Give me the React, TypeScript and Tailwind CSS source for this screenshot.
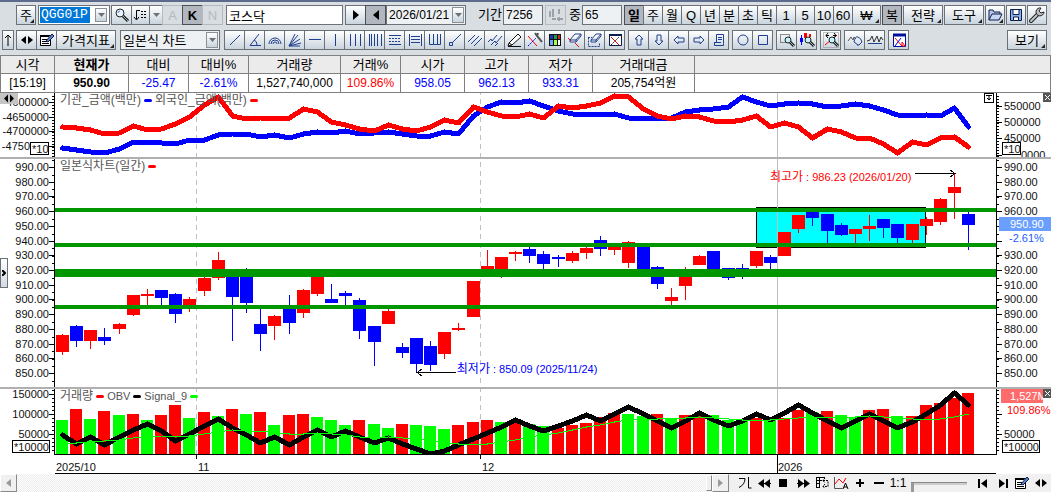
import type { ReactNode } from 'react';
import clsx from 'clsx';

const RED = '#ff0000';
const BLUE = '#0000ff';
const GREEN = '#00ff00';
const NAVY = '#1f3f8f';

/* ---------- data ---------- */

// [open/close top, open/close bottom, high, low, rising]
const candles: [number, number, number, number, boolean][] = [
  [335, 352, 334, 355, true], [326, 341, 325, 347, false], [330, 341, 330, 349, true],
  [337, 341, 328, 345, false], [324, 329, 323, 334, true], [295, 315, 295, 316, true],
  [294, 296, 289, 306, true], [290, 298, 290, 306, false], [294, 314, 293, 323, false],
  [299, 306, 297, 312, true], [278, 291, 277, 296, true], [260, 278, 252, 280, true],
  [272, 297, 270, 341, false], [271, 303, 268, 313, false], [324, 334, 309, 351, false],
  [316, 326, 315, 340, true], [308, 323, 295, 334, false], [290, 313, 289, 318, true],
  [276, 294, 276, 296, true], [299, 303, 284, 303, false], [293, 296, 291, 305, false],
  [300, 331, 298, 339, false], [326, 342, 326, 366, false], [311, 324, 309, 324, true],
  [347, 353, 343, 358, false], [338, 364, 338, 372, false], [346, 365, 341, 371, false],
  [332, 354, 332, 359, true], [328, 330, 323, 331, true], [281, 317, 281, 317, true],
  [266, 270, 250, 270, true], [257, 270, 257, 278, true], [252, 254, 251, 261, true],
  [249, 256, 247, 263, false], [254, 264, 251, 269, false], [257, 259, 255, 267, false],
  [253, 261, 251, 263, true], [248, 253, 247, 259, true], [240, 249, 236, 256, false],
  [246, 250, 246, 255, true], [242, 263, 241, 268, true], [246, 270, 246, 270, false],
  [267, 284, 266, 289, false], [297, 301, 288, 305, true], [275, 286, 267, 300, true],
  [256, 265, 255, 265, true], [251, 270, 251, 270, false], [268, 278, 268, 280, false],
  [268, 270, 264, 279, false], [251, 266, 251, 268, true], [257, 263, 255, 269, false],
  [232, 256, 232, 256, true], [215, 229, 215, 233, true], [211, 218, 211, 226, false],
  [214, 231, 214, 243, false], [225, 235, 223, 236, false], [229, 234, 229, 243, true],
  [226, 229, 215, 241, true], [219, 228, 219, 238, false], [224, 238, 224, 243, false],
  [224, 240, 224, 243, true], [219, 226, 217, 235, true], [199, 222, 198, 225, true],
  [187, 193, 174, 219, true], [214, 225, 212, 250, false],
];

const foreign = [
  127, 128, 130, 134, 133, 126, 130, 129, 124, 117, 105, 97, 116, 119, 118, 118, 118, 109, 112, 122, 125,
  129, 131, 125, 129, 131, 127, 120, 123, 107, 112, 116, 117, 114, 118, 106, 108, 106, 103, 96, 97, 109,
  116, 119, 116, 117, 121, 122, 120, 116, 127, 123, 127, 138, 129, 132, 138, 138, 144, 153, 142, 145, 138, 137, 147,
];

const institution = [
  148, 150, 152, 153, 149, 142, 142, 143, 144, 140, 140, 135, 134, 134, 137, 135, 138, 134, 132, 133, 131,
  134, 133, 132, 134, 136, 136, 132, 134, 116, 107, 102, 103, 101, 106, 111, 114, 114, 115, 114, 118, 118,
  118, 118, 112, 110, 109, 107, 97, 102, 106, 104, 103, 104, 107, 106, 104, 106, 110, 115, 116, 115, 116, 108, 127,
];

const volume = [
  420, 409, 419, 411, 415, 414, 420, 415, 405, 418, 412, 416, 409, 414, 412, 425, 415, 414, 417, 420, 425,
  420, 424, 428, 424, 425, 426, 429, 425, 422, 420, 422, 421, 424, 426, 428, 425, 423, 417, 413, 414, 416,
  414, 418, 415, 415, 415, 420, 420, 418, 418, 418, 410, 412, 411, 415, 417, 410, 409, 416, 416, 405, 403, 398, 393,
];
const volumeUp = '01010101101010101100010010001110100111110010110001011010011011111'
  .split('')
  .map((c) => c === '1');

const obv = [
  435, 444, 437, 445, 437, 430, 424, 431, 441, 434, 426, 419, 428, 435, 443, 437, 445, 437, 430, 437, 431,
  437, 443, 438, 444, 449, 454, 451, 445, 439, 433, 427, 420, 426, 431, 426, 421, 415, 421, 414, 407, 414,
  421, 428, 421, 413, 420, 426, 421, 414, 420, 413, 405, 413, 421, 428, 421, 414, 421, 428, 422, 414, 405, 393, 405,
];

const signal = [
  443, 443, 442, 441, 440, 438, 437, 436, 436, 436, 434, 432, 430, 431, 431, 433, 434, 434, 433, 434, 435,
  437, 438, 437, 438, 439, 441, 443, 444, 444, 444, 442, 440, 437, 435, 433, 430, 427, 425, 422, 420, 419,
  419, 418, 418, 417, 418, 419, 420, 420, 420, 419, 418, 417, 417, 417, 417, 416, 417, 418, 419, 420, 419, 417, 414,
];

const priceLabels = Array.from({ length: 15 }, (_, i) => ({
  text: `${990 - i * 10}.00`,
  y: Math.round(167 + i * 14.71),
}));

// the current price tag takes the place of two labels on the right
const rightPriceLabels = priceLabels.map((l) =>
  l.text === '950.00' || l.text === '940.00' ? { ...l, text: '' } : l,
);

const quotes = [
  { label: '시각', value: '[15:19]', width: 'w-[54px]', color: 'text-black' },
  { label: '현재가', value: '950.90', width: 'w-[74px]', color: 'text-black', bold: true },
  { label: '대비', value: '-25.47', width: 'w-[60px]', color: 'text-[#0000ff]' },
  { label: '대비%', value: '-2.61%', width: 'w-[60px]', color: 'text-[#0000ff]' },
  { label: '거래량', value: '1,527,740,000', width: 'w-[92px]', color: 'text-black' },
  { label: '거래%', value: '109.86%', width: 'w-[60px]', color: 'text-[#ff0000]' },
  { label: '시가', value: '958.05', width: 'w-[64px]', color: 'text-[#0000ff]' },
  { label: '고가', value: '962.13', width: 'w-[64px]', color: 'text-[#0000ff]' },
  { label: '저가', value: '933.31', width: 'w-[64px]', color: 'text-[#0000ff]' },
  { label: '거래대금', value: '205,754억원', width: 'w-[102px]', color: 'text-black' },
];

const periods = ['일', '주', '월', 'Q', '년', '분', '초', '틱', '1', '5', '10', '60'];

/* ---------- icons ---------- */

const Icon = ({ children, w = 18 }: { children: ReactNode; w?: number }) => (
  <svg width={w} height="18" viewBox={`0 0 ${w} 18`} fill="none" stroke={NAVY} className="shrink-0">
    {children}
  </svg>
);

const Lens = () => (
  <>
    <circle cx="7" cy="7" r="4" stroke="#222" fill="#e8f4ff" />
    <path d="M5 7a2 2 0 0 1 2-2" stroke="#4a86d8" />
    <path d="M10 10l5 5" stroke="#222" strokeWidth="3" />
    <path d="M10 10l5 5" stroke="#8fb8b0" />
  </>
);

const Edit = () => (
  <Icon>
    <path d="M2.500 4.500h10v10h-10z" fill="#fff" stroke="#000" />
    <path d="M2 5h9" stroke="#000" strokeWidth="2" />
    <path d="M4 8.500h5M4 10.500h5M4 12.500h7" stroke="#000" />
    <path d="M8 10l6-7 2 2-6 6z" fill="#5c82c8" stroke="#0b1c4a" />
  </Icon>
);

const LeftRight = () => (
  <Icon>
    <path d="M3 9l5-4v8zM15 9l-5-4v8z" fill="#000" stroke="none" />
  </Icon>
);

const Wrench = () => (
  <Icon>
    <path d="M3 15l7-7" stroke="#222" strokeWidth="4" strokeLinecap="round" />
    <path d="M3 15l7-7" stroke="#c4c8cc" strokeWidth="2" strokeLinecap="round" />
    <path d="M13 2a4 4 0 1 0 3 4l-3 1-2-2z" fill="#b9bdc2" stroke="#222" />
  </Icon>
);

const drawingTools: { name: string; art: ReactNode }[] = [
  { name: '추세선', art: <path d="M4 14L14 4" /> },
  { name: '각도선', art: <path d="M13 3L4 14.500h11M8 9q3 1 3 5" /> },
  {
    name: '원호',
    art: <path d="M3 13a6 6 0 0 1 12 0M5 13a4 4 0 0 1 8 0M7 13a2 2 0 0 1 4 0" />,
  },
  { name: '부채꼴', art: <path d="M3 15L9 3M3 15L12 4M3 15l11-7M3 15l12-3M3 15h11" /> },
  { name: '수평선', art: <path d="M3 8.500h12" strokeWidth="1" /> },
  { name: '수직선', art: <path d="M9.500 3v12" /> },
  { name: '삼등분선', art: <path d="M4.500 3v12M9.500 3v12M14.500 3v12" /> },
  { name: '시간대', art: <path d="M3.500 3v12M5.500 3v12M8.500 3v12M11.500 3v12M15.500 3v12" /> },
  {
    name: '되돌림',
    art: (
      <>
        <path d="M3 4.500h12M3 13.500h12" />
        <path d="M3 7.500h12M3 10.500h12" strokeDasharray="2 1" />
      </>
    ),
  },
  { name: '등분선', art: <path d="M3.500 3v12M15.500 3v12M5 5.500h9M5 8.500h9M5 11.500h9" /> },
  { name: '주기선', art: <path d="M3.500 3v10.500h4V3M7.500 13.500h4V3M11.500 13.500h3V3" /> },
  { name: '화살선', art: <path d="M6 12L15 3M3.500 11.500h3v3h-3z" /> },
  { name: '평행선', art: <path d="M2 11l7-7M5 13l8-8M8 15l8-8" /> },
  { name: '채널', art: <path d="M2 11l3-3 1 2 5-6M5 14l4-4 1 2 6-7M9 15l3-3" /> },
  {
    name: '연필',
    art: <path d="M3 12L12 3l3 3-9 8-4 1zM3 12l3 2M2 15.500h13" stroke="#111" fill="#fff" />,
  },
  {
    name: '도구 설정',
    art: (
      <>
        <path d="M2 5l9 10" stroke={RED} />
        <path d="M2 15l8-8" stroke={BLUE} strokeDasharray="2 1" />
        <path d="M9 2l2 3 5 6M12 2l-1 3" stroke="#555" strokeWidth="2" />
      </>
    ),
  },
  {
    name: '색상',
    art: (
      <g stroke="none">
        <path d="M3 3h12v12H3z" fill="#111" />
        <path d="M4 4h3v4H4z" fill="#1738b5" />
        <path d="M8 4h3v4H8z" fill="#19a050" />
        <path d="M12 4h2v4h-2z" fill="#c22" />
        <path d="M4 9h3v5H4z" fill="#6ea8ff" />
        <path d="M8 9h3v5H8z" fill="#a6ff4d" />
        <path d="M12 9h2v5h-2z" fill="#fff" />
      </g>
    ),
  },
  {
    name: '지우개',
    art: (
      <>
        <path d="M4 9l5-6h6l-5 6zM4 9v2h6l5-6V3M10 9v2" fill="#fff" />
        <path d="M2 7l3 3M9 12l4 4" stroke={RED} />
      </>
    ),
  },
  {
    name: '전체 지우기',
    art: (
      <>
        <path d="M2.500 6.500v9h11v-4M2 6.500h4" strokeDasharray="2 1" />
        <path d="M5 9l5-6h5l-5 6zM5 9v2h5l5-6V3M10 9v2" fill="#fff" />
      </>
    ),
  },
  {
    name: '도구 닫기',
    art: (
      <>
        <path d="M3.500 4.500h12v10h-12z" fill="#fff" stroke="#0b1c4a" />
        <path d="M3 4h13" stroke="#0b1c4a" strokeWidth="2" />
        <path d="M5 6l8 8" stroke={RED} />
        <path d="M5 14l8-8" stroke="#222" strokeDasharray="2 1" />
      </>
    ),
  },
];

const arrowTools: { name: string; art: ReactNode }[] = [
  { name: '위', art: <path d="M9 4l4 4h-2v6H7V8H5z" /> },
  { name: '아래', art: <path d="M9 14l4-4h-2V4H7v6H5z" /> },
  { name: '왼쪽', art: <path d="M4 9l4-4v2h6v4H8v2z" /> },
  { name: '오른쪽', art: <path d="M14 9l-4-4v2H4v4h6v2z" /> },
  { name: '메모', art: <path d="M6.500 3.500h7v9M6.500 3.500v8M4.500 11.500v3h9v-2M4 11.500h7M8 6.500h4M8 8.500h4" /> },
];

const shapeTools: { name: string; art: ReactNode }[] = [
  { name: '원', art: <circle cx="9" cy="9" r="5" /> },
  { name: '사각형', art: <path d="M4.500 4.500h9v9h-9z" /> },
];

const SmallLens = () => (
  <>
    <circle cx="10" cy="9" r="3" stroke="#222" fill="#bff4ff" />
    <path d="M12 11l4 4" stroke="#222" strokeWidth="3" />
    <path d="M12 11l4 4" stroke="#8fb8b0" />
  </>
);

const zoomTools: { name: string; art: ReactNode }[] = [
  {
    name: '영역 확대',
    art: (
      <>
        <path d="M2.500 3.500h9v8h-9z" stroke="#222" strokeDasharray="1 1" />
        <SmallLens />
      </>
    ),
  },
  {
    name: '봉 확대',
    art: (
      <>
        <path d="M3.500 4v10" stroke={BLUE} />
        <path d="M2 7h3v4H2z" fill={BLUE} stroke="none" />
        <path d="M6 2h3v5H6zM11 3h2v3h-2z" fill={RED} stroke="none" />
        <SmallLens />
      </>
    ),
  },
];

const chartZoom = [
  {
    name: '차트 확대',
    art: (
      <>
        <path d="M1.500 1.500h15v15h-15z" stroke="#888" strokeDasharray="1 1" />
        <path d="M3 14L15 4" stroke={RED} />
        <path d="M4 4.500h3M11 4.500h3M6 2L4 4.500 6 7M12 2l2 2.500L12 7" stroke="#000" />
        <SmallLens />
      </>
    ),
  },
];

const waveTools: { name: string; art: ReactNode }[] = [
  {
    name: '파동',
    art: (
      <>
        <path d="M2 10l3-4 2 3 1-3 2 2" stroke="#555" />
        <path d="M8 11q1-6 4-5t4 5l-3 3h-2M8 11l4 3" />
      </>
    ),
  },
  {
    name: '진폭',
    art: (
      <>
        <path d="M1 10l3-1 2-4 2 6 3-6 2 6 2-5 2 3" stroke="#333" />
        <path d="M2 12.500h14" />
      </>
    ),
  },
];

const chartSettings = [
  {
    name: '차트 설정',
    art: (
      <>
        <path d="M3.500 3.500h12v12h-12z" fill="#fff" stroke="#00109a" />
        <path d="M3 4h13" stroke="#00109a" strokeWidth="3" />
        <path d="M5 7l7 8M12 11v4h3z" stroke={RED} />
        <path d="M5 15l6-8" stroke={BLUE} />
      </>
    ),
  },
];

/* ---------- controls ---------- */

const Tool = ({
  name,
  children,
  className,
  disabled,
  pressed,
}: {
  name: string;
  children: ReactNode;
  className?: string;
  disabled?: boolean;
  pressed?: boolean;
}) => (
  <button
    type="button"
    aria-label={name}
    disabled={disabled}
    className={clsx(
      'relative -mr-px flex h-5 shrink-0 items-center justify-center overflow-hidden border text-[13px] leading-none',
      pressed
        ? 'border-[#4a4e55] bg-[#b2b6bf]'
        : disabled
          ? 'border-[#b4babf] bg-[#d8dde2] text-[#b4babf]'
          : 'border-[#6b7177] bg-linear-to-b from-white to-[#c9d4dd]',
      className ?? 'w-[21px]',
    )}
  >
    {children}
  </button>
);

const Corner = () => (
  <svg width="4" height="4" className="absolute right-px bottom-px">
    <path d="M4 0v4H0z" fill="#222" />
  </svg>
);

const DropArrow = () => (
  <span className="pointer-events-none absolute top-0.5 right-0.5 bottom-0.5 flex w-3 items-center justify-center border border-[#8b9197] bg-linear-to-b from-white to-[#c9d4dd]">
    <svg width="7" height="4">
      <path d="M0 0h7L3.500 4z" fill="#6b7177" />
    </svg>
  </span>
);

const Group = ({ tools }: { tools: { name: string; art: ReactNode }[] }) => (
  <div className="mr-1 flex">
    {tools.map((t) => (
      <Tool key={t.name} name={t.name}>
        <Icon>{t.art}</Icon>
      </Tool>
    ))}
  </div>
);

const field = 'block h-5 border border-[#6b7177] bg-[#eef1f4] px-0.5 text-xs outline-none';

const MainToolbar = () => (
  <div className="flex h-5 items-center pr-[5px] pl-4">
    <Tool name="주식" className="w-5">
      주
      <Corner />
    </Tool>
    <div className="relative ml-[3px] h-5 w-[72px] shrink-0 border border-[#6b7177] bg-white p-px">
      <input
        aria-label="종목코드"
        defaultValue="QGG01P"
        className="block h-4 w-[50px] bg-[#0078d7] pl-px font-['Liberation_Mono',monospace] text-[13px] text-white outline-none"
      />
      <DropArrow />
    </div>
    <div className="ml-px flex">
      <Tool name="검색">
        <Icon><Lens /></Icon>
      </Tool>
      <Tool name="목록" className="w-[19px]">
        <Icon>
          <path d="M8 4.500H4.500V13M2 11l2.500 3L7 11" stroke="#000" />
          <path d="M9 5.500h6M9 8.500h6M9 11.500h6" stroke="#000" strokeDasharray="2 1" />
        </Icon>
      </Tool>
      <Tool name="목록 열기" className="w-[14px]">
        <svg width="7" height="4">
          <path d="M0 0h7L3.500 4z" fill="#6b7177" />
        </svg>
      </Tool>
      <Tool name="A" disabled>A</Tool>
      <Tool name="K" pressed><b>K</b></Tool>
      <Tool name="N" disabled>N</Tool>
    </div>
    <input
      aria-label="종목명"
      defaultValue="코스닥"
      className="ml-1 h-5 min-w-0 flex-1 border border-[#6b7177] bg-white px-0.5 text-[13px] outline-none"
    />
    <div className="ml-0.5 flex">
      <Tool name="다음">
        <svg width="6" height="10"><path d="M0 0l6 5-6 5z" /></svg>
      </Tool>
      <Tool name="이전" pressed>
        <svg width="6" height="10"><path d="M6 0L0 5l6 5z" /></svg>
      </Tool>
    </div>
    <div className="relative ml-px w-20 shrink-0">
      <input aria-label="조회일자" defaultValue="2026/01/21" className={clsx(field, 'w-full')} />
      <DropArrow />
    </div>
    <label className="ml-3 flex shrink-0 items-center gap-px text-[13px]">
      기간
      <input defaultValue="7256" className={clsx(field, 'w-10')} />
    </label>
    <div className="mx-0.5 flex">
      <Tool name="봉 간격" disabled>
        <Icon>
          <path d="M3 5v6M6 3v8M12 3v5" stroke="#9aa1a8" strokeWidth="2" />
          <path d="M5 13h4M10 13h6M12 11v4" stroke="#9aa1a8" strokeWidth="2" />
        </Icon>
      </Tool>
    </div>
    <label className="flex shrink-0 items-center gap-px pl-0.5 text-[13px]">
      중
      <input defaultValue="65" className={clsx(field, 'w-10')} />
    </label>
    <div className="ml-0.5 flex">
      {periods.map((p, i) => (
        <Tool key={p} name={p} pressed={i === 0} className="w-5">
          {i === 0 ? <b>{p}</b> : p}
        </Tool>
      ))}
      <Tool name="원화" className="w-[29px]">
        ₩
        <Corner />
      </Tool>
    </div>
    <Tool name="복" className="ml-0.5 w-5" pressed>복</Tool>
    <Tool name="전략" className="ml-0.5 w-10">
      전략
      <Corner />
    </Tool>
    <Tool name="도구" className="ml-0.5 w-10">
      도구
      <Corner />
    </Tool>
    <Tool name="열기" className="ml-0.5 w-5">
      <Icon>
        <path d="M3 14V4h4l1 2h6v2" fill="#b8c6ea" stroke="#0b1c4a" />
        <path d="M3 14l3-6h10l-3 6z" fill="#c9d6f6" stroke="#0b1c4a" />
      </Icon>
      <Corner />
    </Tool>
    <Tool name="저장" className="ml-0.5 w-5">
      <Icon>
        <path d="M3.500 3.500h11v11h-11z" fill="#8fb0e8" stroke="#0b1c4a" />
        <path d="M6 3.500h6v5H6zM6.500 11h5v3.500h-5z" fill="#fff" stroke="#0b1c4a" />
      </Icon>
    </Tool>
    <Tool name="설정" className="ml-0.5 w-5">
      <Wrench />
    </Tool>
  </div>
);

const DrawToolbar = () => (
  <div className="mt-[5px] flex h-5 items-center pr-[5px] pl-0.5">
    <Tool name="위로" className="w-3">
      <svg width="8" height="12" fill="none" stroke="#000">
        <path d="M4 12V1M1 4l3-3 3 3" />
      </svg>
    </Tool>
    <div className="ml-[3px] flex">
      <Tool name="좌우"><LeftRight /></Tool>
      <Tool name="편집"><Edit /></Tool>
      <Tool name="가격지표" className="w-[60px]">
        가격지표
        <Corner />
      </Tool>
    </div>
    <div className="relative mr-1 ml-[5px] w-[100px] shrink-0">
      <select
        aria-label="차트 종류"
        className="block h-5 w-full appearance-none border border-[#6b7177] bg-[#eef1f4] pl-0.5 text-[13px] leading-none outline-none"
      >
        <option>일본식 차트</option>
      </select>
      <DropArrow />
    </div>
    <Group tools={drawingTools} />
    <Group tools={arrowTools} />
    <Group tools={shapeTools} />
    <Group tools={zoomTools} />
    <Group tools={chartZoom} />
    <Group tools={waveTools} />
    <Group tools={chartSettings} />
    <Tool name="보기" className="ml-auto w-10">
      보기
      <Corner />
    </Tool>
  </div>
);

const QuoteTable = () => (
  <table className="mt-[5px] w-full table-fixed border-collapse border border-[#808080] bg-white text-center">
    <thead>
      <tr className="h-[18px] bg-[#ebebeb]">
        {quotes.map((q) => (
          <th
            key={q.label}
            scope="col"
            className={clsx('border border-[#808080] p-0 text-[13px] leading-4', q.width, q.bold ? 'font-bold' : 'font-normal')}
          >
            {q.label}
          </th>
        ))}
        <th className="border border-[#808080] p-0" />
      </tr>
    </thead>
    <tbody>
      <tr className="h-[19px]">
        {quotes.map((q) => (
          <td
            key={q.label}
            className={clsx('border border-[#808080] p-0 text-xs leading-4', q.color, q.bold && 'font-bold')}
          >
            {q.value}
          </td>
        ))}
        <td className="border border-[#808080] p-0" />
      </tr>
    </tbody>
  </table>
);

/* ---------- charts ---------- */

const cx = (i: number) => Math.round(62 + i * 14.16) + 0.5;
const points = (ys: number[]) => ys.map((y, i) => `${cx(i)},${y}`).join(' ');

const Plot = ({ top, height, children }: { top: number; height: number; children: ReactNode }) => (
  <svg
    viewBox={`55 ${top} 941 ${height}`}
    height={height}
    preserveAspectRatio="none"
    shapeRendering="crispEdges"
    className="block w-full"
  >
    {children}
  </svg>
);

const MonthLines = () => (
  <g>
    <path d="M196.500 90V454M480.500 90V454" stroke="#c0c0c0" strokeDasharray="5 4" />
    <path d="M777.500 90V454" stroke="#c0c0c0" />
  </g>
);

const Axis = ({
  top,
  height,
  side,
  labels,
  minor,
  children,
}: {
  top: number;
  height: number;
  side: 'left' | 'right';
  labels: { text: string; y: number; x?: number }[];
  minor: number[];
  children?: ReactNode;
}) => {
  const left = side === 'left';
  return (
    <svg
      width="55"
      height={height}
      viewBox={`0 ${top} 55 ${height}`}
      className="block shrink-0 text-[11px]"
      stroke="#000"
    >
      <g shapeRendering="crispEdges">
        <path d={left ? 'M54.500 0V500' : 'M0.500 0V500'} />
        {minor.map((y) => (
          <path key={y} d={left ? `M52 ${y + 0.5}h2` : `M1 ${y + 0.5}h2`} />
        ))}
        {labels.map((l) => (
          <path key={l.y} d={left ? `M49 ${l.y + 0.5}h5` : `M1 ${l.y + 0.5}h5`} />
        ))}
      </g>
      <g stroke="none" fill="#111">
        {labels.map(
          (l) =>
            l.text && (
              <text key={l.y} x={l.x ?? (left ? 49 : 8)} y={l.y + 4} textAnchor={left ? 'end' : 'start'}>
                {l.text}
              </text>
            ),
        )}
      </g>
      {children}
    </svg>
  );
};

const UnitBox = ({ x, y, w, text }: { x: number; y: number; w: number; text: string }) => (
  <g>
    <rect x={x + 0.5} y={y + 0.5} width={w} height="12" fill="#fff" />
    <text x={x + 2} y={y + 11} stroke="none" fill="#111">{text}</text>
  </g>
);

const CloseMark = ({ y }: { y: number }) => (
  <g>
    <path d={`M47 ${y}h8v9h-8z`} fill="#555" stroke="none" />
    <path d={`M49 ${y + 2}l5 5m0-5l-5 5`} stroke="#fff" />
  </g>
);

const Mark = ({ className }: { className: string }) => (
  <span className={clsx('h-[3px] w-2 rounded-full', className)} />
);

const Legend = ({ children }: { children: ReactNode }) => (
  <div className="absolute top-0 left-[5px] flex h-[14px] items-center gap-[3px] text-xs leading-[14px] text-[#555]">
    {children}
  </div>
);

const range = (from: number, to: number, step: number) => {
  const out: number[] = [];
  for (let y = from; y < to; y += step) out.push(Math.round(y));
  return out;
};

const FlowPanel = () => (
  <section className="flex border-b-2 border-[#b0b0b0]">
    <Axis
      side="left"
      top={93}
      height={64}
      minor={range(96, 157, 3)}
      labels={[
        { text: '-4600000', y: 102 },
        { text: '-4650000', y: 117 },
        { text: '-4700000', y: 131 },
        { text: '-4750', y: 146, x: 30 },
      ]}
    >
      <path d="M0 93h18v11H0z" fill="#c4c4c4" stroke="none" />
      <path d="M8 94.500v8L4 98.500zM10 94.500v8l4-4z" fill="#000" stroke="none" />
      <UnitBox x={30} y={142} w={18} text="*10" />
    </Axis>
    <div className="relative min-w-0 flex-1">
      <Plot top={93} height={64}>
        <MonthLines />
        <polyline points={points(institution)} fill="none" stroke={BLUE} strokeWidth="5" strokeLinejoin="round" strokeLinecap="round" />
        <polyline points={points(foreign)} fill="none" stroke={RED} strokeWidth="5" strokeLinejoin="round" strokeLinecap="round" />
      </Plot>
      <Legend>
        기관_금액(백만)
        <Mark className="bg-[#0000ff]" />
        외국인_금액(백만)
        <Mark className="bg-[#ff0000]" />
      </Legend>
      <button
        type="button"
        aria-label="패널 내리기"
        className="absolute top-0 right-0.5 flex h-[10px] w-[10px] items-center justify-center border border-black bg-white"
      >
        <svg width="8" height="8" stroke="#000" fill="none" className="shrink-0">
          <path d="M1 1.500h6M4 1v5M2 4l2 2 2-2" />
        </svg>
      </button>
    </div>
    <Axis
      side="right"
      top={93}
      height={64}
      minor={range(96, 157, 3)}
      labels={[
        { text: '550000', y: 106 },
        { text: '500000', y: 122 },
        { text: '450000', y: 138 },
        { text: '0000', y: 155, x: 25 },
      ]}
    >
      <UnitBox x={6} y={142} w={18} text="*10" />
      <CloseMark y={93} />
    </Axis>
  </section>
);

const PricePanel = () => (
  <section className="relative flex border-b-2 border-[#b0b0b0]">
    <Axis side="left" top={159} height={228} minor={range(160, 387, 7.355)} labels={priceLabels} />
    <div className="relative min-w-0 flex-1">
      <Plot top={159} height={228}>
        <rect x="756.5" y="207.5" width="169" height="40" fill="#00ffff" stroke="#000" />
        <MonthLines />
        {candles.map(([top, bottom, high, low, up], i) => (
          <g key={i} fill={up ? RED : BLUE}>
            <rect x={cx(i) - 0.5} y={high} width="1" height={low - high} />
            <rect x={cx(i) - 6.5} y={top} width="13" height={bottom - top} />
          </g>
        ))}
        <g fill="#009600">
          <rect x="55" y="208" width="941" height="4" />
          <rect x="55" y="243" width="941" height="4" />
          <rect x="55" y="269" width="941" height="8" />
          <rect x="55" y="305" width="941" height="4" />
        </g>
        <g fill="none" stroke="#000">
          <path d="M915 173.500h40M950 170l5 3.500-5 3.500" />
          <path d="M456 372.500h-39M422 369l-5 3.500 5 3.500" />
        </g>
      </Plot>
      <Legend>
        일본식차트(일간)
        <Mark className="bg-[#ff0000]" />
      </Legend>
      <p className="absolute top-[11px] right-[9%] text-[11px] leading-[14px] whitespace-nowrap text-[#ff0000]">
        <span className="text-xs leading-[14px]">최고가</span> : 986.23 (2026/01/20)
      </p>
      <p className="absolute top-[203px] left-[42.7%] text-[11px] leading-[14px] whitespace-nowrap text-[#0000ff]">
        <span className="text-xs leading-[14px]">최저가</span> : 850.09 (2025/11/24)
      </p>
    </div>
    <Axis
      side="right"
      top={159}
      height={228}
      minor={range(160, 387, 7.355)}
      labels={rightPriceLabels}
    >
      <g stroke="none">
        <path d="M3 217h52v14H3z" fill="#6b9fff" />
        <text x="14" y="228" fill="#fff">950.90</text>
        <text x="13" y="242" fill="#1a5cff">-2.61%</text>
      </g>
    </Axis>
    <button
      type="button"
      aria-label="패널 펼치기"
      className="absolute top-[99px] left-0 flex h-[30px] w-2 items-center justify-center border border-[#6b7177] bg-linear-to-b from-white to-[#d3dae2]"
    >
      <svg width="4" height="6" fill="none" stroke="#000" strokeWidth="2">
        <path d="M0 0l3 3-3 3" />
      </svg>
    </button>
  </section>
);

const VolumePanel = () => (
  <section className="flex">
    <Axis
      side="left"
      top={389}
      height={66}
      minor={range(390, 454, 4)}
      labels={[
        { text: '150000', y: 394 },
        { text: '100000', y: 414 },
        { text: '50000', y: 434 },
      ]}
    >
      <UnitBox x={12} y={440} w={37} text="*10000" />
    </Axis>
    <div className="relative min-w-0 flex-1">
      <Plot top={389} height={66}>
        <MonthLines />
        {volume.map((y, i) => (
          <rect key={i} x={cx(i) - 6.5} y={y} width="12" height={454 - y} fill={volumeUp[i] ? RED : GREEN} />
        ))}
        <polyline points={points(obv)} fill="none" stroke="#000" strokeWidth="5" strokeLinejoin="round" strokeLinecap="round" />
        <polyline points={points(signal)} fill="none" stroke={GREEN} />
        <path d="M55 454.500h941" stroke="#000" />
      </Plot>
      <Legend>
        거래량
        <Mark className="bg-[#ff0000]" />
        <span className="text-[11px]">OBV</span>
        <Mark className="bg-black" />
        <span className="text-[11px]">Signal_9</span>
        <Mark className="bg-[#00ff00]" />
      </Legend>
    </div>
    <Axis
      side="right"
      top={389}
      height={66}
      minor={range(390, 454, 4)}
      labels={[
        { text: '', y: 414 },
        { text: '50000', y: 434 },
      ]}
    >
      <g stroke="none">
        <path d="M5 389h50v14H5z" fill="#fff" />
        <path d="M5 389h42v14H5z" fill="#ff6b6b" />
        <text x="14" y="400" fill="#fff">1,527M</text>
        <text x="11" y="414" fill={RED}>109.86%</text>
      </g>
      <UnitBox x={6} y={440} w={37} text="*10000" />
      <CloseMark y={389} />
    </Axis>
  </section>
);

const DateAxis = () => (
  <div className="mr-[55px] ml-[55px] h-[19px] border-b border-black">
    <svg viewBox="55 455 941 18" height="18" preserveAspectRatio="none" className="block w-full text-[11px]" fill="#111">
      <path d="M196.500 455v4M480.500 455v4M777.500 455v18" stroke="#000" />
      <text x="56" y="471">2025/10</text>
      <text x="198" y="471">11</text>
      <text x="482" y="471">12</text>
      <text x="778" y="471">2026</text>
    </svg>
  </div>
);

const BarButton = ({ name, className, children }: { name: string; className: string; children: ReactNode }) => (
  <button type="button" aria-label={name} className={clsx('flex h-[18px] shrink-0 items-center justify-center text-xs', className)}>
    {children}
  </button>
);

const BottomBar = () => (
  <footer className="flex h-[18px] items-center bg-[#f0f0f0]">
    <BarButton name="왼쪽으로" className="w-[17px] border border-white border-r-[#888] border-b-[#888]">
      <svg width="5" height="8"><path d="M5 0v8L0 4z" fill="#999" /></svg>
    </BarButton>
    <div className="h-full flex-1 bg-[repeating-conic-gradient(#fff_0_25%,#ececec_0_50%)] bg-[length:2px_2px]" />
    <div className="h-4 w-[6px] border border-white border-r-[#888] border-b-[#888] bg-[#f0f0f0]" />
    <BarButton name="오른쪽으로" className="w-[17px] border border-white border-r-[#888] border-b-[#888]">
      <svg width="5" height="8"><path d="M0 0v8l5-4z" fill="#999" /></svg>
    </BarButton>
    <BarButton name="기간" className="ml-1.5 w-5">
      <Icon>
        <path d="M3 4.500h6q0 6-6 9M12.500 3v11h3" stroke="#000" />
      </Icon>
    </BarButton>
    <BarButton name="뒤로" className="w-[18px]">
      <svg width="13" height="9"><path d="M6 0v9L0 4.500zM12 0v9L6 4.500z" /><path d="M6 4h7v1H6z" /></svg>
    </BarButton>
    <BarButton name="정지" className="w-5"><span className="h-2 w-2 bg-black" /></BarButton>
    <BarButton name="앞으로" className="w-5">
      <svg width="13" height="9"><path d="M1 0v9l6-4.500zM7 0v9l6-4.500z" /><path d="M0 4h7v1H0z" /></svg>
    </BarButton>
    <BarButton name="표" className="w-[18px]">
      <Icon>
        <path d="M3.500 3v11M6.500 3v11M3 3.500h9M3 6.500h6M3 9.500h4M3 13.500h4" stroke="#000" />
        <path d="M10 6.500h5v6h-5M12 4l-2 2.500L12 9M12 10l-2 2.500 2 2" stroke="#000" strokeDasharray="2 1" />
      </Icon>
    </BarButton>
    <BarButton name="자동" className="w-5">
      <Icon>
        <path d="M2.500 3v11.500h8" stroke="#555" />
        <path d="M3 10l4-5 4 4 3-5" stroke={RED} />
        <path d="M11 15l2.500-6 2.500 6M12 13h3" stroke="#000" />
      </Icon>
    </BarButton>
    <BarButton name="확대" className="w-[18px]">
      <svg width="8" height="8"><path d="M3 0h2v3h3v2H5v3H3V5H0V3h3z" /></svg>
    </BarButton>
    <BarButton name="축소" className="w-5"><span className="h-0.5 w-2.5 bg-black" /></BarButton>
    <BarButton name="원래 크기" className="w-[18px]">1:1</BarButton>
    <input
      type="range"
      aria-label="배율"
      defaultValue={0}
      className="mx-1 h-3 w-14 appearance-none bg-transparent [&::-webkit-slider-runnable-track]:h-[3px] [&::-webkit-slider-runnable-track]:border-t [&::-webkit-slider-runnable-track]:border-[#888] [&::-webkit-slider-runnable-track]:bg-[#ccc] [&::-webkit-slider-thumb]:h-2.5 [&::-webkit-slider-thumb]:w-[3px] [&::-webkit-slider-thumb]:appearance-none [&::-webkit-slider-thumb]:bg-[#999]"
    />
    <BarButton name="처음" className="w-[22px]">
      <svg width="9" height="9"><path d="M0 0h2v9H0zM9 0v9L3 4.500z" /></svg>
    </BarButton>
    <BarButton name="마지막" className="w-5">
      <svg width="9" height="9"><path d="M7 0h2v9H7zM0 0v9l6-4.500z" /></svg>
    </BarButton>
    <BarButton name="편집" className="w-[18px]"><Edit /></BarButton>
    <BarButton name="좌우" className="w-5"><LeftRight /></BarButton>
  </footer>
);

const App = () => (
  <main className="bg-white font-['Liberation_Sans','Noto_Sans_CJK_KR',sans-serif] text-black">
    <header className="border-t-2 border-[#5c6b8c] bg-[#d9dee3] pt-[3px]">
      <MainToolbar />
      <DrawToolbar />
      <QuoteTable />
    </header>
    <FlowPanel />
    <PricePanel />
    <VolumePanel />
    <DateAxis />
    <BottomBar />
  </main>
);

export default App;
